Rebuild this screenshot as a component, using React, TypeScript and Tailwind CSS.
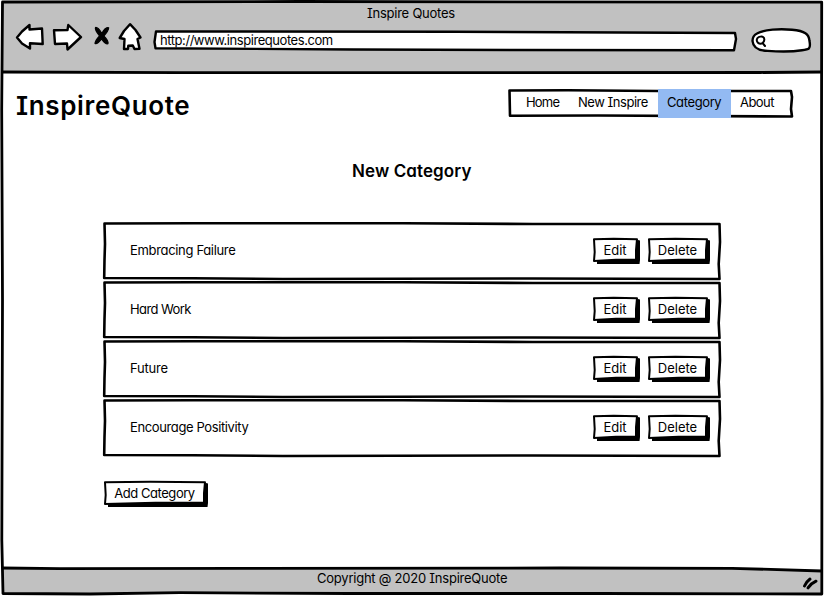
import React from "react";

type SketchProps = { w: number; h: number; fill?: string; d: string; stroke?: number; shadow?: string };

/** Hand-drawn outline that sits behind the content of its parent box. */
function Outline({ w, h, fill = "white", d, stroke = 2.6, shadow }: SketchProps) {
  return (
    <svg className="absolute inset-0 overflow-visible" width={w} height={h} viewBox={`0 0 ${w} ${h}`} aria-hidden="true">
      {shadow && <path d={shadow} fill="black" />}
      <path d={d} fill={fill} stroke="black" strokeWidth={stroke} strokeLinejoin="round" />
    </svg>
  );
}

function SketchButton({ label, w, className }: { label: string; w: number; className: string }) {
  return (
    <button className={`relative flex h-[24px] items-center justify-center whitespace-nowrap ${className}`}>
      <Outline
        w={w}
        h={24}
        stroke={2}
        shadow={`M4 22 L${w - 1} 2 L${w + 1} 2.5 L${w + 1} 22 L${w + 0.5} 26 L4 26 Z`}
        d={`M1 1.2 L${w * 0.45} 0.8 L${w - 2} 1.2 L${w - 3} 12 L${w - 3} 21.8 L${w * 0.5} 21.8 L1 23 L1.7 14 Z`}
      />
      <span className="relative pr-[2px]">{label}</span>
    </button>
  );
}

const rows = [
  { name: "Embracing Failure", tracking: "tracking-[-0.33px]" },
  { name: "Hard Work", tracking: "tracking-[-0.6px]" },
  { name: "Future", tracking: "tracking-[-0.2px]" },
  { name: "Encourage Positivity", tracking: "tracking-[-0.38px]" },
];

function Row({ name, tracking }: { name: string; tracking: string }) {
  return (
    <li className="relative flex h-[57px] items-center pb-px pl-[27px] pr-[12px]">
      <Outline w={618} h={57} d="M1.5 1.5 L90 1.2 L300 1.3 L430 2 L616.5 2 L617 20 L615.7 42 L616.5 57 L430 56.5 L180 57 L90 56.3 L1.2 56 L1.5 38 L2 22 Z" />
      <span className={`relative grow ${tracking}`}>{name}</span>
      <div className="flex gap-[9px]">
        <SketchButton label="Edit" w={46} className="w-[46px]" />
        <SketchButton label="Delete" w={61} className="w-[61px]" />
      </div>
    </li>
  );
}

export default function App() {
  return (
    <div className="relative flex h-[596px] w-[824px] flex-col overflow-hidden bg-white font-['Inter',sans-serif] text-[13px] leading-[16px] text-black [font-feature-settings:'cv08','cv11']">
      <header className="ml-[2px] mr-[2px] mt-[2px] flex h-[70px] flex-col bg-[#c1c1c1]">
        <div className="mt-[3px] pl-[365px] tracking-[-0.24px]">Inspire Quotes</div>
        <div className="flex pl-[13px] pt-px">
          <svg width="128" height="29" viewBox="15 22 128 29" fill="white" stroke="black" strokeWidth="2.4" strokeLinejoin="round" strokeLinecap="round">
            <path d="M17 37.5 L22 31.5 L29.5 25 L29.5 29.5 L42 28.5 L42.7 44 L30 43.2 L30 48.6 L22 43.5 Z" />
            <path d="M54 30.2 L67.5 30 L68.3 25 L81 37 L67.5 49.5 L67 43.5 L55 44 Z" />
            <path
              d="M95.5 27.5 Q98 27 101.8 33.5 Q105.5 26.5 108.7 27.8 Q108.5 31 103.8 36 Q108.8 41 108 43.7 Q105.5 44.5 101.5 38.8 Q97.5 44.5 95 43.5 Q95 41 99.5 36 Q94.5 29.5 95.5 27.5 Z"
              fill="black"
              strokeWidth="1.2"
            />
            <path d="M130 24.2 L135.5 30 L140.5 37.5 L137.5 39 L139.5 48.8 L134.5 49 L132.8 45.5 L128.3 45.7 L128 49 L124 49 L124.5 39 L119.7 38 L124 31 Z" />
          </svg>
          <div className="relative ml-[11px] mt-[9px] h-[20px] w-[583px] pl-[6px] leading-[19px] tracking-[-0.44px]">
            <Outline w={583} h={20} stroke={2.4} d="M2 0.4 L300 0.8 L581 2 L582 8 L580 19.3 L360 19 L200 18.5 L1.5 17.3 L0.5 11 Z" />
            <span className="relative">http://www.inspirequotes.com</span>
          </div>
          <div className="relative ml-[14px] mt-[7px] h-[24px] w-[60px]">
            <Outline w={60} h={24} stroke={2.4} d="M6 4.5 C13 0.5 29 -0.5 41 0.8 C54 2 58 5 58.5 12 C60 20 58 20.5 51 21.2 C37 23.5 26 22.5 14 21.7 C5 21 2 17 1.5 12 C1.5 9 3 6 6 4.5 Z" />
            <svg className="absolute left-[4px] top-[6px]" width="12" height="14" fill="none" stroke="black" strokeWidth="2" strokeLinecap="round">
              <path d="M8 8 C4 10 1 7 2 4 C3 1 8 1 9 3 C10 6 9 7 7.5 8 L10 11" />
            </svg>
          </div>
        </div>
      </header>

      <main className="flex h-[497px] flex-col">
        <div className="flex h-[66px] justify-between pl-[16px] pr-[31px] pt-[17px]">
          <h1 className="mt-[1px] text-[26px] font-semibold leading-[32px] tracking-[0.65px]">InspireQuote</h1>
          <nav className="relative h-[29px] w-[285px]">
            <Outline w={285} h={29} d="M1.5 1.5 L60 1.3 L150 2 L283 2 L284 8 L283 20 L284 27.5 L90 26.5 L2 26.7 Z" />
            <ul className="relative flex h-[29px] items-start leading-[27px]">
              <li className="ml-[18px] w-[52px] tracking-[-0.8px]">Home</li>
              <li className="w-[80px] whitespace-nowrap tracking-[-0.47px]">New Inspire</li>
              <li className="h-[29px] w-[73px] bg-[#93baf2] pl-[9px] tracking-[-0.38px]">Category</li>
              <li className="pl-[9px] tracking-[-0.55px]">About</li>
            </ul>
          </nav>
        </div>
        <h2 className="mt-[22px] pl-[352px] text-[17px] font-semibold leading-[22px] tracking-[0.1px]">New Category</h2>
        <ul className="ml-[103px] mt-[40px] flex w-[618px] flex-col gap-[2px]">
          {rows.map((row) => (
            <Row key={row.name} {...row} />
          ))}
        </ul>
        <div className="ml-[104px] mt-[25px] flex tracking-[-0.45px]">
          <SketchButton label="Add Category" w={103} className="w-[103px]" />
        </div>
      </main>

      <footer className="relative mx-[2px] flex h-[25px] bg-[#c1c1c1] pl-[315px] pt-[1px] tracking-[-0.23px]">
        <span>Copyright @ 2020 InspireQuote</span>
        <svg className="absolute right-[3px] top-[7px]" width="17" height="15" fill="none" stroke="black" strokeWidth="3" strokeLinecap="round">
          <path d="M2.5 10 Q4.5 5.5 8 3 M6 11.8 Q9 7.5 14 5.2" />
        </svg>
      </footer>

      <svg className="pointer-events-none absolute inset-0" width="824" height="596" fill="none" stroke="black" strokeWidth="2.8" strokeLinejoin="round">
        <path d="M732 566 L822 566 L822 571 L732 568.5 Z" fill="white" stroke="none" />
        <path d="M2.5 2 L300 1.5 L821.7 2.2 L821.5 150 L822 400 L821.8 594 L600 593.5 L350 593.5 L180 592.7 L90 594 L3 593.5 L1.8 540 L2.5 300 L1.7 110 Z" />
        <path d="M2 72 L180 72.7 L760 72.5 L822 72 M2 568 L60 568.7 L240 568.3 L560 568 L732 568.3 L822 571" />
      </svg>
    </div>
  );
}
